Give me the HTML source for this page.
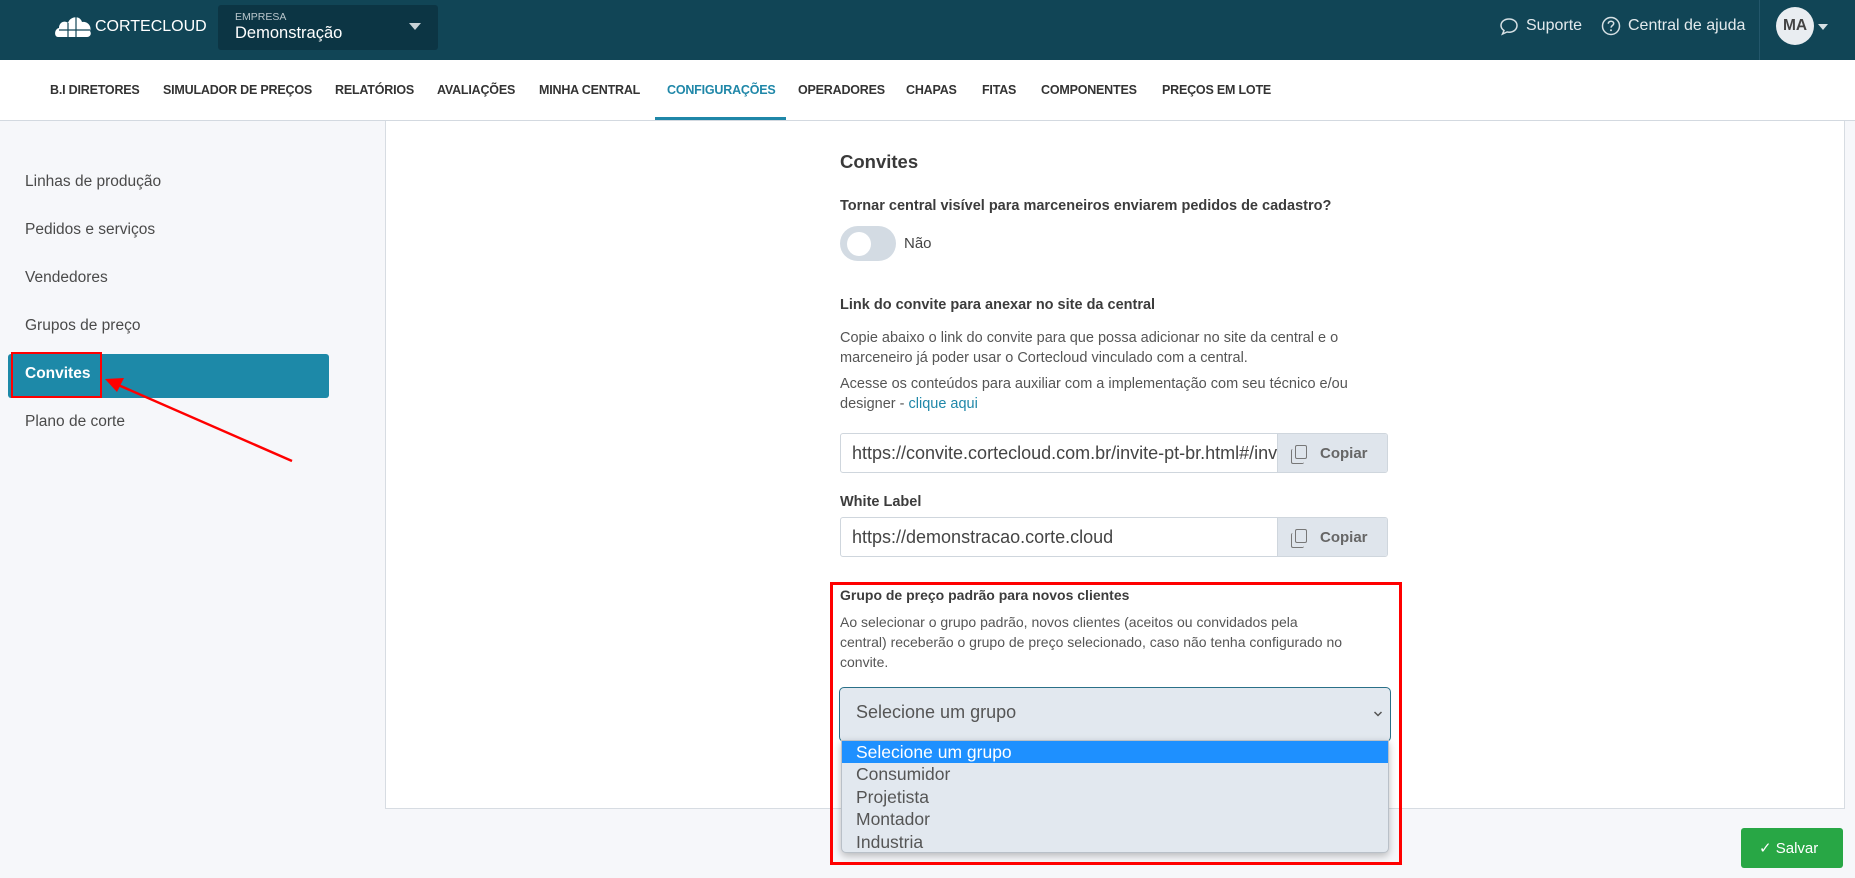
<!DOCTYPE html>
<html><head><meta charset="utf-8"><style>
*{box-sizing:border-box;margin:0;padding:0}
body{width:1855px;height:878px;overflow:hidden;background:#f6f7fa;font-family:"Liberation Sans",sans-serif;color:#444;position:relative}
.abs{position:absolute}
.hdr{left:0;top:0;width:1855px;height:60px;background:#114556}
.nav{left:0;top:60px;width:1855px;height:61px;background:#fff;border-bottom:1px solid #d3d9e0}
.nav span{position:absolute;top:23px;font-size:12.5px;font-weight:bold;color:#333;white-space:nowrap;letter-spacing:-0.2px}
.side{left:0;top:121px;width:385px;height:757px;background:#f6f7fa}
.side div{position:absolute;left:25px;font-size:15.5px;color:#4a4a4a}
.panel{left:385px;top:121px;width:1460px;height:688px;background:#fff;border:1px solid #d7dce2;border-top:none}
.t{position:absolute;left:840px;white-space:nowrap}
.b{font-weight:bold;font-size:14.5px;color:#3c3c3c}
.p{font-size:14.5px;color:#555;line-height:20px}
.inp{position:absolute;left:840px;width:548px;height:40px;border:1px solid #cfd6dd;border-radius:3px;background:#fff;overflow:hidden}
.inp .v{position:absolute;left:11px;top:9px;font-size:18px;color:#444;white-space:nowrap}
.inp .c{position:absolute;right:0;top:0;width:110px;height:38px;background:#dfe5ec;border-left:1px solid #cfd6dd;font-size:15px;font-weight:bold;color:#666;padding:11px 0 0 42px}
.inp .c i{position:absolute;left:17px;top:11px;width:12px;height:14px;border:1.5px solid #777;border-radius:2px}
.inp .c i:before{content:"";position:absolute;left:-5px;top:3px;width:12px;height:14px;border-left:1.5px solid #777;border-bottom:1.5px solid #777;border-radius:2px}
.opt{position:absolute;left:0;width:100%;height:22.5px;font-size:17.5px;color:#555;padding-left:14px;line-height:22px}
</style></head><body>
<div class="abs hdr"></div>
<svg class="abs" style="left:54px;top:14px" width="40" height="24" viewBox="0 0 40 24"><path d="M4 23 C0 23 0 15 5 14 C5 8 11 6 14 9 C16 2 26 1 28 8 C34 7 38 13 36 17 C38 20 36 23 33 23 Z" fill="#fff"/><path d="M14 9 V23 M22 3 V23 M5 16 H36" stroke="#114556" stroke-width="1.2"/></svg>
<div class="abs" style="left:95px;top:18px;font-size:16px;color:#fff">CORTECLOUD</div>
<div class="abs" style="left:218px;top:5px;width:220px;height:45px;background:#0c3544;border-radius:3px"></div>
<div class="abs" style="left:235px;top:11px;font-size:10.5px;color:#b9c6cc">EMPRESA</div>
<div class="abs" style="left:235px;top:24px;font-size:16.5px;color:#fff">Demonstração</div>
<div class="abs" style="left:409px;top:23px;width:0;height:0;border-left:6px solid transparent;border-right:6px solid transparent;border-top:7px solid #c8d2d6"></div>
<svg class="abs" style="left:1499px;top:17px" width="20" height="19" viewBox="0 0 20 19"><path d="M10 2 C5 2 2 5 2 8.5 C2 11 3.5 12.5 5 13.5 L3.5 17 L8 15 C8.7 15.1 9.3 15.2 10 15.2 C15 15.2 18 12 18 8.5 C18 5 15 2 10 2 Z" fill="none" stroke="#d6e0e4" stroke-width="1.5"/></svg>
<div class="abs" style="left:1526px;top:17px;font-size:16px;color:#e3eaed">Suporte</div>
<svg class="abs" style="left:1601px;top:16px" width="20" height="20" viewBox="0 0 20 20"><circle cx="10" cy="10" r="8.5" fill="none" stroke="#d6e0e4" stroke-width="1.5"/><path d="M7.3 7.8 C7.3 6 8.6 5.2 10 5.2 C11.5 5.2 12.7 6.2 12.7 7.6 C12.7 9.4 10 9.6 10 11.6" fill="none" stroke="#d6e0e4" stroke-width="1.5"/><circle cx="10" cy="14.3" r="1" fill="#d6e0e4"/></svg>
<div class="abs" style="left:1628px;top:17px;font-size:16px;color:#e3eaed">Central de ajuda</div>
<div class="abs" style="left:1759px;top:0;width:1px;height:60px;background:#23566a"></div>
<div class="abs" style="left:1776px;top:7px;width:38px;height:38px;border-radius:50%;background:#e9edf1;font-size:15.5px;font-weight:bold;color:#444;text-align:center;line-height:38px">MA</div>
<div class="abs" style="left:1818px;top:24px;width:0;height:0;border-left:5px solid transparent;border-right:5px solid transparent;border-top:6px solid #d6e0e4"></div>

<div class="abs nav">
<span style="left:50px">B.I DIRETORES</span>
<span style="left:163px">SIMULADOR DE PREÇOS</span>
<span style="left:335px">RELATÓRIOS</span>
<span style="left:437px">AVALIAÇÕES</span>
<span style="left:539px">MINHA CENTRAL</span>
<span style="left:667px;color:#1f87a8">CONFIGURAÇÕES</span>
<span style="left:798px">OPERADORES</span>
<span style="left:906px">CHAPAS</span>
<span style="left:982px">FITAS</span>
<span style="left:1041px">COMPONENTES</span>
<span style="left:1162px">PREÇOS EM LOTE</span>
<div style="position:absolute;left:655px;top:57px;width:131px;height:3px;background:#1f87a8"></div>
</div>

<div class="abs side">
<div style="top:52px">Linhas de produção</div>
<div style="top:100px">Pedidos e serviços</div>
<div style="top:148px">Vendedores</div>
<div style="top:196px">Grupos de preço</div>
<div style="left:8px;top:233px;width:321px;height:44px;background:#1d89a8;border-radius:3px"></div>
<div style="top:244px;color:#fff;font-weight:bold">Convites</div>
<div style="top:292px">Plano de corte</div>
<div style="left:11px;top:231px;width:91px;height:46px;border:2.5px solid #f00"></div>
</div>
<svg class="abs" style="left:0;top:0" width="900" height="700"><line x1="292" y1="461" x2="116" y2="384" stroke="#f00" stroke-width="2.5"/><polygon points="105,379 124,378 117,392" fill="#f00"/><line x1="623" y1="590" x2="815" y2="630" stroke="#f00" stroke-width="2.5"/><polygon points="827,633 810,623 807,637" fill="#f00"/></svg>

<div class="abs panel"></div>
<div class="t" style="top:151px;font-size:18.5px;font-weight:bold;color:#3a3a3a">Convites</div>
<div class="t b" style="top:198px">Tornar central visível para marceneiros enviarem pedidos de cadastro?</div>
<div class="abs" style="left:840px;top:226px;width:56px;height:35px;border-radius:18px;background:#d3dbe3"></div>
<div class="abs" style="left:847px;top:232px;width:24px;height:24px;border-radius:50%;background:#fff"></div>
<div class="t" style="left:904px;top:235px;font-size:15px;color:#444">Não</div>
<div class="t b" style="top:297px">Link do convite para anexar no site da central</div>
<div class="t p" style="top:328px">Copie abaixo o link do convite para que possa adicionar no site da central e o<br>marceneiro já poder usar o Cortecloud vinculado com a central.</div>
<div class="t p" style="top:374px">Acesse os conteúdos para auxiliar com a implementação com seu técnico e/ou<br>designer - <span style="color:#1f87a8">clique aqui</span></div>
<div class="inp" style="top:433px"><div class="v">https://convite.cortecloud.com.br/invite-pt-br.html#/inv</div><div class="c"><i></i>Copiar</div></div>
<div class="t b" style="top:494px">White Label</div>
<div class="inp" style="top:517px"><div class="v">https://demonstracao.corte.cloud</div><div class="c"><i></i>Copiar</div></div>

<div class="t b" style="top:587px;font-size:14px">Grupo de preço padrão para novos clientes</div>
<div class="t p" style="top:612px;font-size:14px">Ao selecionar o grupo padrão, novos clientes (aceitos ou convidados pela<br>central) receberão o grupo de preço selecionado, caso não tenha configurado no<br>convite.</div>
<div class="abs" style="left:839px;top:687px;width:552px;height:55px;background:#e2e8ef;border:1.5px solid #2a7088;border-radius:5px"></div>
<div class="t" style="left:856px;top:702px;font-size:18px;color:#555">Selecione um grupo</div>
<svg class="abs" style="left:1373px;top:710px" width="10" height="8" viewBox="0 0 10 8"><path d="M1.5 2 L5 5.5 L8.5 2" fill="none" stroke="#555" stroke-width="1.5"/></svg>
<div class="abs" style="left:841px;top:740px;width:548px;height:113px;background:#e2e8ef;border:1px solid #b9c0c8;border-radius:0 0 5px 5px;box-shadow:0 3px 8px rgba(0,0,0,.25);overflow:hidden">
<div class="opt" style="top:0;background:#1e90ff;color:#fff;height:22px">Selecione um grupo</div>
<div class="opt" style="top:22px">Consumidor</div>
<div class="opt" style="top:44.5px">Projetista</div>
<div class="opt" style="top:67px">Montador</div>
<div class="opt" style="top:89.5px">Industria</div>
</div>
<div class="abs" style="left:830px;top:582px;width:572px;height:283px;border:3px solid #f00"></div>

<div class="abs" style="left:1741px;top:828px;width:102px;height:40px;background:#28a745;border-radius:3px;color:#fff;font-size:15px;padding:11px 0 0 18px">✓ Salvar</div>
</body></html>
